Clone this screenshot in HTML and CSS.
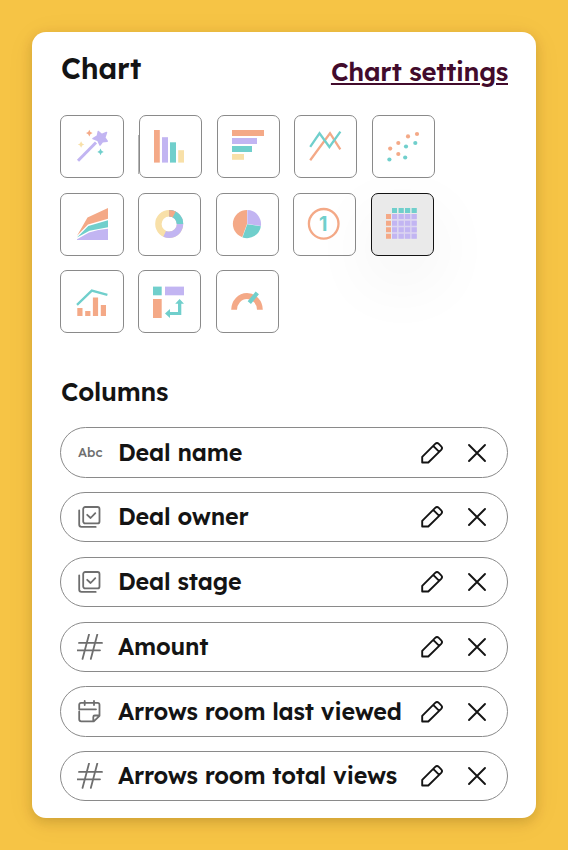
FILE: index.html
```html
<!DOCTYPE html>
<html lang="en">
<head>
<meta charset="utf-8">
<title>Chart settings</title>
<link rel="stylesheet" href="styles.css">
</head>
<body>
<svg class="defs" width="0" height="0" aria-hidden="true">
  <symbol id="pencil" viewBox="0 0 24 24"><path d="M2.2 21.5V15.9L15.2 2.9Q17 1.2 18.8 2.9L21.2 5.3Q22.9 7.1 21.2 8.9L8.3 21.5ZM13.2 4.9L19.2 10.9"/></symbol>
  <symbol id="cross" viewBox="0 0 24 24"><path d="M4 4L20 20M20 4L4 20"/></symbol>
  <symbol id="check" viewBox="0 0 26 26"><rect x="6.2" y="3" width="16.3" height="16.4" rx="2"/><path d="M2.2 6.3V20.6Q2.2 22.9 4.5 22.9H18.7M10.2 10.8L13.6 14L18.3 9.1"/></symbol>
  <symbol id="hash" viewBox="0 0 26 26"><path d="M2 8.9H25M.3 16.3H23M12 .5L5.5 24.9M20.3 .5L13.8 24.9"/></symbol>
  <symbol id="calendar" viewBox="0 0 26 26"><path d="M2.2 10.3V5.8Q2.2 3.8 4.2 3.8H20.5Q22.5 3.8 22.5 5.8V16.8L16.8 22.3H4.2Q2.2 22.3 2.2 20.3V12.5M2.2 10.3H19M7.7 2V6M17 2V6M16.3 22V18Q16.3 16.5 17.8 16.5H22.2"/></symbol>
</svg>
<main class="card">
  <header class="header">
    <h1 class="title">Chart</h1>
    <a class="settings" href="#">Chart settings</a>
  </header>

  <section class="charts">
    <div class="row row-first">
      <button class="tile"><svg viewBox="61 116 62 61"><path class="violet-line wide" d="M78 160.7L96 142.5"/><path class="violet round" d="M98.3 131.6L101.8 134.6L106.5 132.6L104.8 137.6L107.2 141.2L102.6 141.6L100 145L98 140.6L93 138.6L97.4 136Z"/><path class="orange" d="M89.3 129.7L90.4 132L92.6 133.1L90.4 134.2L89.3 136.5L88.2 134.2L86 133.1L88.2 132Z"/><path class="yellow" d="M81.1 141.3L82.2 143.4L84.3 144.5L82.2 145.6L81.1 147.7L80 145.6L77.9 144.5L80 143.4Z"/><path class="teal" d="M100.5 148.6L101.6 150.8L103.7 151.9L101.6 153L100.5 155.2L99.4 153L97.3 151.9L99.4 150.8Z"/></svg></button>
      <button class="tile tile-edge"><svg viewBox="140 116 61 61"><path class="orange" d="M154 130h5.8v32.6H154z"/><path class="violet" d="M162 137.2h6v25.4h-6z"/><path class="teal" d="M170 142.3h6v20.3h-6z"/><path class="yellow" d="M178.2 150.2h5.8v12.4h-5.8z"/></svg></button>
      <button class="tile"><svg viewBox="218 116 61 61"><path class="orange" d="M232 130h32v6h-32z"/><path class="violet" d="M232 138h25v6h-25z"/><path class="teal" d="M232 146h20v6h-20z"/><path class="yellow" d="M232 154h12v5.8h-12z"/></svg></button>
      <button class="tile"><svg viewBox="295 116 61 61"><path class="orange-line" d="M310.2 160.2L330 133.2L340.3 149.3"/><path class="teal-line" d="M310.2 146.8L319.5 133.3L329.4 147L340.4 131.6"/></svg></button>
      <button class="tile"><svg viewBox="373 116 61 61"><g class="orange"><circle cx="390.2" cy="148.6" r="2.1"/><circle cx="398.3" cy="143" r="2.1"/><circle cx="408" cy="136.4" r="2.1"/><circle cx="417" cy="134" r="2.1"/><circle cx="398.3" cy="154" r="2.1"/></g><g class="teal"><circle cx="389.4" cy="159.5" r="2.1"/><circle cx="406" cy="146.5" r="2.1"/><circle cx="415.3" cy="143" r="2.1"/><circle cx="405.2" cy="157.5" r="2.1"/></g></svg></button>
    </div>
    <div class="row">
      <button class="tile"><svg viewBox="61 194 62 61"><path class="orange" d="M77 235.8L87.5 217.5L108 208V218.8L88 224.5Z"/><path class="teal" d="M77 237.6L88.3 226L108 220.2V227.3L89.5 230.8Z"/><path class="violet" d="M77 240V239.2L89 232.5Q98 229.5 108 228.8V240Z"/></svg></button>
      <button class="tile"><svg viewBox="139 194 61 61"><g class="donut" transform="rotate(-90 169.2 224)"><circle class="yellow-line" cx="169.2" cy="224" r="10.8"/><circle class="violet-line" cx="169.2" cy="224" r="10.8" pathLength="360" stroke-dasharray="205 155"/><circle class="teal-line" cx="169.2" cy="224" r="10.8" pathLength="360" stroke-dasharray="90 270"/><circle class="orange-line" cx="169.2" cy="224" r="10.8" pathLength="360" stroke-dasharray="28 332"/></g></svg></button>
      <button class="tile"><svg viewBox="217 194 61 61"><path class="orange" d="M247 224L242.2 237.2A14 14 0 0 1 247 210Z"/><path class="violet" d="M247.3 224V210A14 14 0 0 1 260.9 225.9Z"/><path class="teal" d="M247.2 224.3L260.9 226.2A14 14 0 0 1 242.5 237.4Z"/></svg></button>
      <button class="tile"><svg viewBox="294 194 61 61"><circle class="orange-line" cx="323.7" cy="223.8" r="14.8"/><text class="digit" x="323.3" y="231" text-anchor="middle">1</text></svg></button>
      <button class="tile tile-active"><svg viewBox="372 194 61 61"><path class="grid-back" d="M392 214h24.7v24.7H392z"/><path class="teal" d="M392 208h5v5h-5zM398.6 208h5.2v5h-5.2zM405 208h5.2v5H405zM411.6 208h5.2v5h-5.2z"/><path class="orange" d="M386 214h5v5h-5zM386 220.8h5v5h-5zM386 227.2h5v5h-5zM386 233.8h5v5h-5z"/><path class="violet" d="M392 214h5v5h-5zM398.6 214h5.2v5h-5.2zM405 214h5.2v5H405zM411.6 214h5.2v5h-5.2zM392 220.8h5v5h-5zM398.6 220.8h5.2v5h-5.2zM405 220.8h5.2v5H405zM411.6 220.8h5.2v5h-5.2zM392 227.2h5v5h-5zM398.6 227.2h5.2v5h-5.2zM405 227.2h5.2v5H405zM411.6 227.2h5.2v5h-5.2zM392 233.8h5v5h-5zM398.6 233.8h5.2v5h-5.2zM405 233.8h5.2v5H405zM411.6 233.8h5.2v5h-5.2z"/></svg></button>
    </div>
    <div class="row">
      <button class="tile"><svg viewBox="61 271 62 61"><path class="teal-line" d="M77 304.8L91.8 290.6L107.4 294.8"/><path class="orange" d="M77.3 308h5.2v8h-5.2zM85.2 311h5.2v5h-5.2zM92.9 297.5h5.2V316h-5.2zM100.8 305h5.2v11h-5.2z"/></svg></button>
      <button class="tile"><svg viewBox="139 271 61 61"><path class="teal" d="M153 286.6h8.7v8.7H153z"/><path class="violet" d="M165 286.6h19v8.7h-19z"/><path class="orange" d="M153 299h8.7v19H153z"/><path class="teal" d="M179.6 299L184 303.8H181.3V315.1H170V318L165 313.5L170 309V312H178V303.8H175.2Z"/></svg></button>
      <button class="tile"><svg viewBox="217 271 61 61"><path class="orange" d="M231.2 309.7A15.8 16.7 0 0 1 262.8 309.7H257A10 10.7 0 0 0 237 309.7Z"/><path class="needle" d="M249.3 302.6L257.3 292.8"/></svg></button>
    </div>
  </section>

  <h2 class="subtitle">Columns</h2>
  <ul class="columns">
    <li class="pill"><span class="abc">Abc</span><span class="label">Deal name</span><svg class="act"><use href="#pencil"/></svg><svg class="act"><use href="#cross"/></svg></li>
    <li class="pill"><svg class="kind"><use href="#check"/></svg><span class="label">Deal owner</span><svg class="act"><use href="#pencil"/></svg><svg class="act"><use href="#cross"/></svg></li>
    <li class="pill"><svg class="kind"><use href="#check"/></svg><span class="label">Deal stage</span><svg class="act"><use href="#pencil"/></svg><svg class="act"><use href="#cross"/></svg></li>
    <li class="pill"><svg class="kind"><use href="#hash"/></svg><span class="label">Amount</span><svg class="act"><use href="#pencil"/></svg><svg class="act"><use href="#cross"/></svg></li>
    <li class="pill"><svg class="kind"><use href="#calendar"/></svg><span class="label">Arrows room last viewed</span><svg class="act"><use href="#pencil"/></svg><svg class="act"><use href="#cross"/></svg></li>
    <li class="pill"><svg class="kind"><use href="#hash"/></svg><span class="label">Arrows room total views</span><svg class="act"><use href="#pencil"/></svg><svg class="act"><use href="#cross"/></svg></li>
  </ul>
</main>
</body>
</html>
```

FILE: styles.css
```css
* { box-sizing: border-box; }

body {
  margin: 0;
  height: 850px;
  padding: 32px;
  overflow: hidden;
  background: #f6c445;
  color: #141414;
  font-family: Lexend, Lato, sans-serif;
}

.defs { display: none; }

.card {
  width: 504px;
  height: 786px;
  padding: 0 28px;
  border-radius: 14px;
  background: #fff;
  box-shadow: 0 4px 12px rgba(80, 50, 0, .2), 0 4px 30px rgba(80, 50, 0, .06);
}

.header {
  display: flex;
  justify-content: space-between;
  height: 83px;
}

.title, .subtitle { margin: 0; font-weight: 600; white-space: nowrap; }
.title { padding: 18px 0 0 1px; font-size: 28.8px; line-height: 36px; letter-spacing: -.15px; }

.settings {
  padding-top: 21px;
  color: #420b2c;
  font-size: 25.6px;
  font-weight: 600;
  line-height: 36px;
  letter-spacing: -.25px;
  white-space: nowrap;
  text-decoration-thickness: 2px;
  text-underline-offset: 2px;
}

.charts { display: grid; grid-template-rows: 78px 77px 63px; }
.row { display: grid; grid-template-columns: 78px 78px 77px 78px 63px; }
.row-first { grid-template-columns: 79px 78px 77px 78px 63px; }

.tile {
  position: relative;
  width: 63px;
  height: 63px;
  padding: 0;
  border: 1px solid #8a8a8a;
  border-radius: 7px;
  background: #fff;
}
.tile:first-child { width: 64px; }
.tile svg { display: block; width: 100%; height: 100%; }
.tile-edge::before {
  content: "";
  position: absolute;
  left: -2px;
  top: 19px;
  width: 1px;
  height: 39px;
  background: #b5b5b5;
}
.tile-active {
  border-color: #141414;
  background: #eaeaea;
  box-shadow: 0 24px 70px rgba(0, 0, 0, .06);
}

.orange { fill: #f4a987; }
.violet { fill: #c2b5f2; }
.teal { fill: #70cfcc; }
.yellow { fill: #f8e0a8; }
.round { stroke: #c2b5f2; stroke-width: 1.6; stroke-linejoin: round; }
.grid-back { fill: #dcd6f0; }
.orange-line, .teal-line, .violet-line, .yellow-line { fill: none; stroke-width: 2.3; }
.orange-line { stroke: #f4a987; }
.teal-line { stroke: #70cfcc; }
.violet-line { stroke: #c2b5f2; }
.yellow-line { stroke: #f8e0a8; }
.wide { stroke-width: 3; }
.donut circle { stroke-width: 6.4; }
.needle { stroke: #70cfcc; stroke-width: 4.2; }
.digit { fill: #70cfcc; font: 700 19.5px Inter, Roboto, sans-serif; }

.subtitle {
  height: 94px;
  padding: 41px 0 0 1px;
  font-size: 25.3px;
  line-height: 35px;
  letter-spacing: -.2px;
}

.columns {
  display: grid;
  grid-template-rows: 65px 65px 65px 64px 65px 50px;
  margin: 0;
  padding: 0;
  list-style: none;
}

.pill {
  display: flex;
  align-items: center;
  height: 50px;
  padding: 0 18px 0 16px;
  border: 1px solid #8a8a8a;
  border-radius: 26px;
}
.pill:first-child, .pill:nth-child(5) { height: 51px; }

.kind, .abc { flex: none; width: 26px; height: 26px; margin-right: 15px; }
.kind { fill: none; stroke: #6e6e6e; stroke-width: 1.8; stroke-linecap: round; stroke-linejoin: round; }
.abc { padding-left: 1px; color: #6e6e6e; font-size: 13px; font-weight: 500; line-height: 25px; }

.label { flex: 1; min-width: 0; font-size: 23.3px; font-weight: 600; line-height: 30px; letter-spacing: -.18px; white-space: nowrap; }

.act { flex: none; width: 24px; height: 24px; fill: none; stroke: #141414; stroke-width: 1.9; stroke-linejoin: round; stroke-linecap: round; }
.act + .act { margin-left: 21px; }
```
